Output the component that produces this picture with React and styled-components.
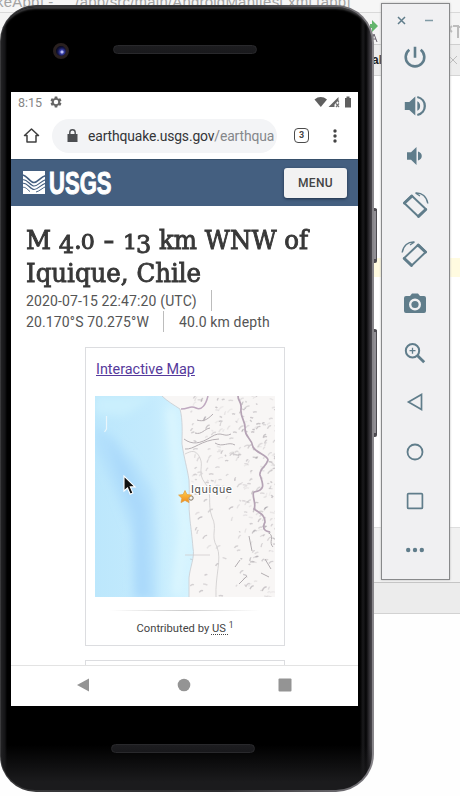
import React from 'react';
import styled, { createGlobalStyle } from 'styled-components';

const GlobalStyle = createGlobalStyle`
  * { box-sizing: border-box; }
  html, body { margin: 0; padding: 0; background: #fff; overflow: hidden; }
  body { font-family: Roboto, "Liberation Sans", sans-serif; }
`;

const Desktop = styled.main`
  position: relative;
  width: 460px;
  height: 796px;
  overflow: hidden;
  background: #fefefe;
`;

/* ---------- Editor window in the background ---------- */
const Editor = styled.div`
  display: flex;
  flex-direction: column;
  height: 614px;
`;
const TitleBar = styled.div`
  height: 13px;
  background: #f6f6f6;
  border-bottom: 1px solid #d9d9d9;
  overflow: hidden;
`;
const TitleText = styled.div`
  margin: -7px 0 0 -4px;
  font: 15px/18px "Liberation Sans", sans-serif;
  color: #a3a3a3;
  white-space: pre;
  letter-spacing: 0.2px;
`;
const ToolStrip = styled.div`
  display: flex;
  justify-content: space-between;
  height: 32px;
  padding: 7px 0 0 370px;
  background: #f4f4f4;
  border-bottom: 1px solid #cfcfcf;
`;
const TabStrip = styled.div`
  display: flex;
  justify-content: space-between;
  align-items: center;
  height: 31px;
  padding-left: 372px;
  font: bold 12px "Liberation Sans", sans-serif;
  color: #222;
  background: #ededed;
  border-bottom: 1px solid #d5d5d5;
`;
const Code = styled.div`
  height: 451px;
  padding-top: 182px;
  background: #fff;
`;
const ActiveLine = styled.div`
  height: 19px;
  background: #fffbe0;
`;
const BottomPane = styled.div`
  height: ${(p) => p.$h}px;
  background: ${(p) => p.$bg};
  border-top: 1px solid ${(p) => p.$line};
`;

/* ---------- Phone ---------- */
const Phone = styled.section`
  position: absolute;
  left: 0;
  top: 5px;
  width: 374px;
  height: 787px;
  padding: 2px 2px 2px 1px;
  border-radius: 36px 38px 38px 36px;
  background: linear-gradient(90deg, #3a3a3c 0, #2b2b2d 60%, #77757a 98%, #8a888c 100%);
`;
const PhoneFace = styled.div`
  display: flex;
  flex-direction: column;
  align-items: flex-start;
  width: 100%;
  height: 100%;
  padding-left: 10px;
  border-radius: 34px 36px 36px 34px;
  background:
    linear-gradient(180deg, transparent 738px, #1b1b1d 775px),
    linear-gradient(90deg, #222224 0, #141416 4px, #000 6px, #000 359px, #1a1a1c 362px, #050506 365px, #3b393e 369px, #4b494e 371px);
  box-shadow: inset 0 4px 2px -2px #3d3d3f;
`;
const TopBezel = styled.header`
  display: flex;
  width: 100%;
  height: 85px;
  padding: 36px 0 0 42px;
`;
const Camera = styled.i`
  width: 16px;
  height: 16px;
  border: 3px solid #29201f;
  border-radius: 50%;
  background: radial-gradient(circle at 60% 60%, #b9bdf5 0 1px, #3a41a8 2px, #15174d 4px, #08091f 6px);
`;
const Speaker = styled.i`
  width: ${(p) => p.$w}px;
  height: 9px;
  margin: ${(p) => p.$m};
  border-radius: 5px;
  background: linear-gradient(#1d1d20, #19191c);
  border: 1px solid #29292c;
`;
const SideButton = styled.i`
  position: absolute;
  left: 373px;
  top: ${(p) => p.$y}px;
  width: 4px;
  height: ${(p) => p.$h}px;
  border: solid #4d4b50;
  border-width: 3px 1px 4px 0;
  border-radius: 0 2px 2px 0;
  background: #929095;
`;
const Screen = styled.div`
  display: flex;
  flex-direction: column;
  width: 347px;
  height: 614px;
  overflow: hidden;
  background: #fff;
`;
const StatusBar = styled.div`
  display: flex;
  align-items: center;
  flex: none;
  height: 20px;
  padding: 0 6px 0 7px;
  font-size: 12.5px;
  color: #858585;
  svg:first-of-type { margin-left: 8px; }
`;
const Spacer = styled.span`flex: 1;`;
const BrowserBar = styled.div`
  display: flex;
  align-items: center;
  flex: none;
  height: 47px;
  padding: 0 12px;
`;
const Address = styled.div`
  display: flex;
  align-items: center;
  flex: none;
  width: 225px;
  height: 34px;
  margin: 0 17px 0 12px;
  padding: 0 6px 0 15px;
  border-radius: 17px;
  background: #f3f4f6;
  svg { flex: none; margin-right: 10px; }
`;
const Url = styled.span`
  font-size: 13.9px;
  line-height: 20px;
  letter-spacing: -0.14px;
  white-space: nowrap;
  color: #333538;
  span { color: #85878a; }
`;
const TabCount = styled.span`
  width: 15px;
  height: 15px;
  flex: none;
  margin-right: 23px;
  border: 1.6px solid #4b4b4b;
  border-radius: 4px;
  font: bold 9px/13px Roboto, sans-serif;
  text-align: center;
  color: #444;
`;
const SiteHeader = styled.div`
  display: flex;
  align-items: center;
  justify-content: space-between;
  flex: none;
  height: 47px;
  padding: 0 11px;
  border-top: 1px solid #37506b;
  background: #445f80;
`;
const MenuButton = styled.button`
  width: 63px;
  height: 30px;
  padding: 0;
  border: 0;
  border-radius: 3px;
  background: #f2f2f2;
  box-shadow: 0 1px 3px #1d2f46;
  font: 500 12px Roboto, sans-serif;
  letter-spacing: 0.4px;
  color: #444;
`;
const Page = styled.article`
  flex: 1;
  min-height: 0;
  overflow: hidden;
  padding: 18px 14px 0 15px;
`;
const Title = styled.h1`
  width: 390px;
  height: 66px;
  margin: 0;
  font: 400 25.5px/32.5px "DejaVu Serif", serif;
  -webkit-text-stroke: 0.9px #383838;
  color: #383838;
  white-space: nowrap;
`;
const TitleLine = styled.span`
  display: block;
  width: max-content;
  height: 32.5px;
  transform: scaleX(${(p) => p.$sx});
  transform-origin: 0 0;
`;
/* old-style figures: short ones sit at x-height, long ones descend */
const Figure = styled.span`
  display: inline-block;
  position: relative;
  top: ${(p) => (p.$low ? 4 : 0)}px;
  font-size: ${(p) => (p.$low ? 25 : 20)}px;
  line-height: 1;
  transform: scaleX(${(p) => (p.$low ? 1 : 1.15)});
`;
const Dash = styled.span`
  display: inline-block;
  margin: 0 3px;
  transform: scaleX(1.3);
`;
const Facts = styled.div`
  display: flex;
  height: 21px;
  align-items: center;
  font-size: 14px;
  color: #555;
  white-space: nowrap;
`;
const Fact = styled.span`
  letter-spacing: 0.13px;
`;
const Divider = styled.i`
  width: 1px;
  height: 21px;
  margin: 0 15px 0 14px;
  background: #bcbcbc;
`;
const Card = styled.div`
  display: flex;
  flex-direction: column;
  width: 200px;
  height: 299px;
  margin: ${(p) => p.$mt}px 0 0 59px;
  padding: 10px 9px 0;
  border: 1px solid #dcdde0;
`;
const MapLink = styled.a`
  height: 24px;
  margin: 0 0 14px 1px;
  font-size: 14.4px;
  line-height: 23px;
  color: #563a9c;
  text-decoration: underline;
`;
const Rule = styled.i`
  flex: none;
  width: 150px;
  height: 1px;
  margin: 13px auto 0;
  background: linear-gradient(90deg, #fff, #ccc, #fff);
`;
const Credit = styled.div`
  margin-top: 10px;
  text-align: center;
  font-size: 11.2px;
  line-height: 15px;
  color: #444;
  abbr { text-decoration: underline dotted; text-underline-offset: 2px; }
  sup { font-size: 8.5px; line-height: 0; vertical-align: 4px; }
`;
const NavBar = styled.nav`
  display: flex;
  align-items: center;
  justify-content: space-between;
  flex: none;
  height: 41px;
  padding: 0 66px 2px 65px;
  border-top: 1px solid #e3e3e3;
  background: #fff;
`;

/* ---------- Emulator controls ---------- */
const Controls = styled.aside`
  position: absolute;
  left: 381px;
  top: 3px;
  width: 69px;
  height: 577px;
  display: flex;
  flex-direction: column;
  align-items: center;
  padding-right: 1px;
  border: 1px solid #88898b;
  background: #f0f0f2;
  box-shadow: 0 0 2px #bbb;
`;
const WindowButtons = styled.div`
  display: flex;
  justify-content: space-between;
  align-items: center;
  width: 37px;
  height: 28.5px;
  padding-top: 4px;
`;
const ControlButton = styled.button`
  display: grid;
  place-items: center;
  width: 40px;
  height: 49.3px;
  padding: 0;
  border: 0;
  background: none;
  flex: none;
`;

const C = '#607d8b';
const Icon = ({ children, size = 28 }) => (
  <svg width={size} height={size} viewBox="0 0 28 28" fill="none" stroke={C} strokeWidth="2">{children}</svg>
);

const RotateShape = () => (
  <>
    <path d="M10.800 4.800L25 18.200 17.300 25.500 3.200 12z" strokeWidth="1.900" strokeLinejoin="round" />
    <path d="M10.800 5.200L3.500 12M24.700 18.500l-7.200 6.800" strokeWidth="3" strokeLinecap="round" />
    <path d="M14.500 2c6.500-.5 11.300 3.500 12.300 10.500M14.500 2l4.500 3" strokeWidth="1.400" />
  </>
);

const controls = [
  <Icon key="power"><path d="M8.300 6.700a9.300 9.300 0 1 0 11.400 0M14 3.700v11" strokeWidth="2.600" /></Icon>,
  <Icon key="up"><path d="M3.800 10h4.500l6-5.500v19l-6-5.500H3.800z" fill={C} stroke="none" /><path d="M16.300 9.200v9.600c3.800-1.500 3.800-8.100 0-9.600z" fill={C} stroke="none" /><path d="M16.300 5c10 2.200 10 15.800 0 18" strokeWidth="2.300" /></Icon>,
  <Icon key="down"><path d="M6 10.300h4l5.500-5.300v18L10 17.700H6z" fill={C} stroke="none" /><path d="M17 9.500v9c5-1.500 5-7.500 0-9z" fill={C} stroke="none" /></Icon>,
  <Icon key="left"><RotateShape /></Icon>,
  <Icon key="right"><g transform="translate(28 0) scale(-1 1)"><RotateShape /></g></Icon>,
  <Icon key="camera"><path fillRule="evenodd" d="M5 6h4l2-2.600h6l2 2.600h4q2 0 2 2v13q0 2-2 2H5q-2 0-2-2V8q0-2 2-2zM14 8.500a6 6 0 1 0 0 12 6 6 0 0 0 0-12z" fill={C} stroke="none" /><circle cx="14" cy="14.500" r="3.600" fill={C} stroke="none" /></Icon>,
  <Icon key="zoom"><circle cx="11.500" cy="11.700" r="6.700" /><path d="M16.600 16.700l6.600 6.600" strokeWidth="2.800" /><path d="M11.500 8.700v6M8.500 11.700h6" strokeWidth="1.300" /></Icon>,
  <Icon key="back"><path d="M20.500 6.500v15L7.500 14z" strokeWidth="1.700" /></Icon>,
  <Icon key="home"><circle cx="14" cy="14" r="7.500" strokeWidth="1.800" /></Icon>,
  <Icon key="overview"><rect x="6.600" y="6.600" width="14.800" height="14.800" rx="1" strokeWidth="1.700" /></Icon>,
  <Icon key="more"><g fill={C} stroke="none"><circle cx="7.200" cy="14" r="2.200" /><circle cx="14" cy="14" r="2.200" /><circle cx="20.800" cy="14" r="2.200" /></g></Icon>,
];

const UsgsLogo = () => (
  <svg width="92" height="30" viewBox="0 0 92 30">
    <path d="M1 3h22v23H1z" fill="#fff" />
    <g fill="none" stroke="#445f80">
      <path d="M0 7c5 0 8 7.500 12 7.500S18 9 24 7.500" strokeWidth="1.700" />
      <path d="M0 12c5-2 8 6 12 6s6-4.500 12-6.500M0 15.500c5-2 8 6 12 6s6-4.500 12-6.500" strokeWidth="1.200" />
      <path d="M0 19.500c4-1 5 2 8 4M14 24c4-1 6-4 10-5.500" strokeWidth="1" />
    </g>
    <text x="27" y="25.500" fill="#fff" stroke="#fff" strokeWidth="1" fontFamily="Liberation Sans, sans-serif" fontWeight="700" fontSize="30.500" textLength="62.500" lengthAdjust="spacingAndGlyphs">USGS</text>
  </svg>
);

/* Small ridge marks spread over the land with a fixed seed */
const ridges = (() => {
  let s = 41;
  const rnd = () => { s = (s * 16807) % 2147483647; return s / 2147483647; };
  const out = [];
  while (out.length < 270) {
    const x = 94 + rnd() * 86;
    const y = rnd() * 201;
    const keep = x > 142 ? 0.95 : y < 92 ? 0.7 : x < 116 ? 0.35 : 0.12;
    const dx = 1 + rnd() * 4;
    const dy = (rnd() - 0.7) * 5;
    const o = 0.1 + rnd() * 0.35;
    if (rnd() < keep) out.push({ d: `M${x.toFixed(1)} ${y.toFixed(1)}q${(dx / 2).toFixed(1)} ${(dy - 1).toFixed(1)} ${dx.toFixed(1)} ${dy.toFixed(1)}`, o });
  }
  return out;
})();

const coast = 'M67 0c5 5 12 9 18 13c3 11 2 25 2 35c2 14 5 23 7 36c1 12-1 26 1 40c1 9 2 16 3 28c2 9-3 19-4 30v19';

const MapSvg = styled.svg`
  display: block;
  flex: none;
`;

const QuakeMap = () => (
  <MapSvg width="180" height="201" viewBox="0 0 180 201">
    <defs>
      <linearGradient id="sea" x1="0" x2="1"><stop offset="0" stopColor="#bce7fc" /><stop offset=".55" stopColor="#c3eafd" /><stop offset="1" stopColor="#d5f4ff" /></linearGradient>
      <filter id="soft" x="-30%" y="-30%" width="160%" height="160%"><feGaussianBlur stdDeviation="4" /></filter>
      <filter id="fine" x="-5%" y="-5%" width="110%" height="110%"><feGaussianBlur stdDeviation=".6" /></filter>
      <linearGradient id="star" x1="0" y1="0" x2="0" y2="1"><stop offset="0" stopColor="#ffd24d" /><stop offset="1" stopColor="#f08a1c" /></linearGradient>
      <clipPath id="water"><path d={`${coast}H0V0z`} /></clipPath>
    </defs>
    <rect width="180" height="201" fill="#f8f6f5" />
    <path d={`${coast}H0V0z`} fill="url(#sea)" />
    <g clipPath="url(#water)">
      <g filter="url(#soft)">
        <path d="M0 30l20 12 20 24 18 30 4 50v60H38l-2-70-16-40L0 50z" fill="#abdbfc" opacity=".6" />
        <path d="M12 42l22 32 16 36 4 90H41l-1-80-13-30z" fill="#a4d4fa" opacity=".6" />
        <path d="M0 0h60L30 20 0 18z" fill="#caeffd" />
        <path d="M76 12l6 60 8 60-8 66" stroke="#dcf6fe" strokeWidth="9" fill="none" />
      </g>
    </g>
    <path d={coast} fill="none" stroke="#c9cbd0" strokeWidth=".8" />
    <g fill="none" stroke="#8f8990" strokeWidth="1.400" filter="url(#fine)">
      {ridges.map((r) => <path key={r.d} d={r.d} opacity={r.o} />)}
    </g>
    <g fill="none" filter="url(#fine)">
      <path d="M89 43c8 6 16 5 27-2s12 1 20-3M90 53c9 1 16-9 34-10M102 24c6 2 10 0 16-6M120 47c8 5 13-2 20 2M100 37c7 2 9-4 15-5" stroke="#b5afb3" />
      <path d="M86 13c8 0 9-4 15-1s10-4 12-12" stroke="#bfa9c0" strokeWidth="1.500" />
      <path d="M90 58c6-3 11-5 15 4c4 8-3 15 5 25c8 9 2 21 7 34c6 12-2 18 5 30c5 12-2 29-1 50" stroke="#d3d0d0" strokeWidth=".9" />
      <path d="M143 0c0 6 4 5 3 13c-1 9 5 12 4 20c0 9 7 9 8 18c3 6 15 8 15 13c-2 7-9 9-8 15c3 9 6 15-6 17c-3 3 3 12 0 17c8 5 11 7 11 13c-3 6-1 9 5 10" stroke="#b5a3b5" strokeWidth="1.700" />
      <path d="M174 137c6 4-1 9 4 14M170 163l6 10M166 177l8 4M140 171l5-7M154 140l3 15M144 188l8-8" stroke="#b2adb0" />
      <path d="M90 159h25" stroke="#d0cdcd" strokeWidth=".8" />
    </g>
    <path d="M11.500 20v13l-2 3" stroke="#e9f6fb" strokeWidth="1.200" fill="none" />
    <circle cx="96" cy="102" r="2.200" fill="#f7f4ed" stroke="#7f7565" strokeWidth="1" />
    <path d="M90 94.500l1.900 4.100 4.500.5-3.300 3.100.9 4.400-4-2.200-4 2.200.9-4.400-3.300-3.100 4.500-.5z" fill="url(#star)" stroke="#e39a36" strokeWidth=".7" />
    <text x="96" y="97" fontFamily="DejaVu Sans, sans-serif" fontSize="10" fill="#4d4d4d" stroke="#fff" strokeWidth="2" paintOrder="stroke" textLength="41">Iquique</text>
    <path d="M29 80v15l3.500-3 2.700 6.200 2.700-1.300-2.600-6h4.800z" fill="#111" stroke="#fff" strokeWidth="1.100" />
  </MapSvg>
);

export default function App() {
  return (
    <Desktop>
      <GlobalStyle />
      <Editor>
        <TitleBar><TitleText>{'keApp] -  .../app/src/main/AndroidManifest.xml [app]'}</TitleText></TitleBar>
        <ToolStrip>
          <svg width="14" height="24"><path d="M0 4h2V0l6 6-6 6V8H0z" fill="#62b56b" /><path d="M1 22l3-8 3 8M2 19h4" fill="none" stroke="#6c6570" /></svg>
          <svg width="10" height="24"><path d="M2 15q-4 3 0 6M3 15h5v12M8 16h2" transform="translate(0 -9)" fill="none" stroke="#bdbdbd" strokeWidth="2" /></svg>
        </ToolStrip>
        <TabStrip>
          <span>ake</span>
          <svg width="11" height="10"><path d="M0 1l8 8M8 1L0 9" stroke="#bdbdbd" /></svg>
        </TabStrip>
        <Code><ActiveLine /></Code>
        <BottomPane $h={55} $bg="#f1f1f1" $line="#dedede" />
        <BottomPane $h={31} $bg="#ececec" $line="#c5c5c5" />
        <BottomPane $h={1} $bg="#d2d2d2" $line="#d2d2d2" />
      </Editor>

      <SideButton $y={208} $h={55} />
      <SideButton $y={329} $h={108} />
      <Phone>
        <PhoneFace>
          <TopBezel>
            <Camera />
            <Speaker $w={144} $m="2px 0 0 44px" />
          </TopBezel>
          <Screen>
            <StatusBar>
              8:15
              <svg width="12" height="12" viewBox="0 0 24 24"><path fillRule="evenodd" d="M9.500 1h5l.6 3.400 2.300 1.300 3.200-1.200L23 8.800l-2.600 2.200v2l2.600 2.200-2.400 4.300-3.200-1.200-2.300 1.300-.6 3.400h-5l-.6-3.400-2.300-1.300-3.200 1.200L1 15.200 3.600 13v-2L1 8.800l2.400-4.300 3.200 1.200 2.300-1.300zM12 7.500a4.500 4.500 0 1 0 0 9 4.500 4.500 0 0 0 0-9z" fill="#666" /></svg>
              <Spacer />
              <svg width="38" height="14" viewBox="0 0 38 14">
                <path d="M.5 4.500c4-3.300 8.500-3.300 12.500 0L6.800 12z" fill="#5f5f5f" />
                <path d="M14.500 12L24.500 2v3.500l-4 4V12z" fill="#666" /><path d="M24.500 5.500v2M22 8.500l3 3.500m0-3.500L22 12" stroke="#777" strokeWidth="1.200" />
                <path d="M31 3h1.500V1.500h3V3H37v9.500h-6z" fill="#5f5f5f" />
              </svg>
            </StatusBar>
            <BrowserBar>
              <svg width="17" height="17" viewBox="0 0 17 17"><path d="M1.500 8.500l7-6.500 7 6.500H13V15H4V8.500z" fill="none" stroke="#404040" strokeWidth="1.500" strokeLinejoin="round" /></svg>
              <Address>
                <svg width="11" height="14" viewBox="0 0 11 14"><path d="M.5 5h10v8H.5z" fill="#4c4e51" /><path d="M2.800 6V3.500a2.700 2.700 0 0 1 5.400 0V6" fill="none" stroke="#4c4e51" strokeWidth="1.400" /></svg>
                <Url>earthquake.usgs.gov<span>/earthqua</span></Url>
              </Address>
              <TabCount>3</TabCount>
              <svg width="6" height="16" viewBox="0 0 6 16" fill="#444"><circle cx="3" cy="3" r="1.700" /><circle cx="3" cy="8" r="1.700" /><circle cx="3" cy="13" r="1.700" /></svg>
            </BrowserBar>
            <SiteHeader><UsgsLogo /><MenuButton>MENU</MenuButton></SiteHeader>
            <Page>
              <Title>
                <TitleLine $sx={0.96}>M <Figure $low>4</Figure>.<Figure>0</Figure> <Dash>-</Dash> <Figure>1</Figure><Figure $low>3</Figure> km WNW of</TitleLine>
                <TitleLine $sx={0.96}>Iquique, Chile</TitleLine>
              </Title>
              <Facts><Fact>2020-07-15 22:47:20 (UTC)</Fact><Divider /></Facts>
              <Facts><Fact>20.170°S 70.275°W</Fact><Divider /><Fact>40.0 km depth</Fact></Facts>
              <Card $mt={15}>
                <MapLink>Interactive Map</MapLink>
                <QuakeMap />
                <Rule />
                <Credit>Contributed by <abbr>US </abbr><sup>1</sup></Credit>
              </Card>
              <Card $mt={14} />
            </Page>
            <NavBar>
              <svg width="14" height="14"><path d="M13 .5v13L1 7z" fill="#949494" /></svg>
              <svg width="14" height="14"><circle cx="7" cy="7" r="6.300" fill="#949494" /></svg>
              <svg width="14" height="14"><rect x=".5" y=".5" width="13" height="13" rx="1" fill="#949494" /></svg>
            </NavBar>
          </Screen>
          <Speaker $w={144} $m="38px 0 0 100px" />
        </PhoneFace>
      </Phone>

      <Controls>
        <WindowButtons>
          <svg width="9" height="9"><path d="M1 1l7 7M8 1L1 8" stroke={C} strokeWidth="1.500" /></svg>
          <svg width="9" height="9"><path d="M0 4.500h8" stroke="#809ba5" strokeWidth="1.500" /></svg>
        </WindowButtons>
        {controls.map((icon) => <ControlButton key={icon.key}>{icon}</ControlButton>)}
      </Controls>
    </Desktop>
  );
}
